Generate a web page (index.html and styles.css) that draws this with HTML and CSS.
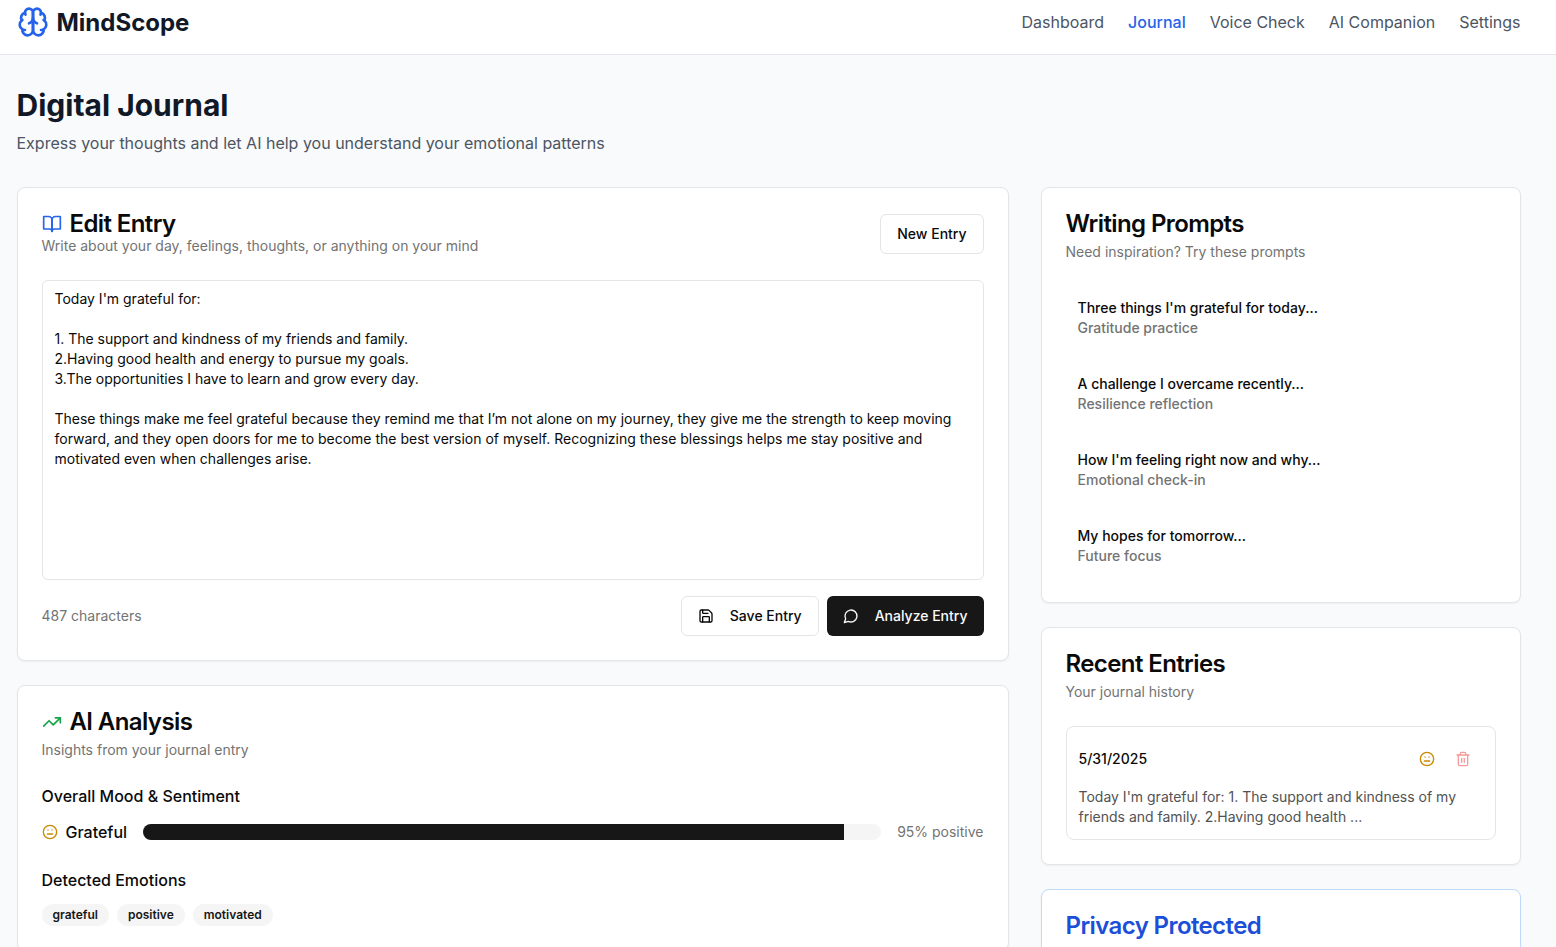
FILE: index.html
```html
<!DOCTYPE html>
<html lang="en">
<head>
    <meta charset="UTF-8">
    <meta name="viewport" content="width=device-width, initial-scale=1.0">
    <title>Digital Journal - MindScope</title>
    <link rel="stylesheet" href="styles.css">
</head>
<body>
    <header class="topbar">
        <a class="brand" href="#">
            <svg class="brand-icon" viewBox="0 0 24 24">
                <path d="M12 5a3 3 0 1 0-5.997.125 4 4 0 0 0-2.526 5.77 4 4 0 0 0 .556 6.588A4 4 0 1 0 12 18Z"/>
                <path d="M12 5a3 3 0 1 1 5.997.125 4 4 0 0 1 2.526 5.77 4 4 0 0 1-.556 6.588A4 4 0 1 1 12 18Z"/>
                <path d="M15 13a4.5 4.5 0 0 1-3-4 4.5 4.5 0 0 1-3 4"/>
                <path d="M17.599 6.5a3 3 0 0 0 .399-1.375"/>
                <path d="M6.003 5.125A3 3 0 0 0 6.401 6.5"/>
                <path d="M3.477 10.896a4 4 0 0 1 .585-.396"/>
                <path d="M19.938 10.5a4 4 0 0 1 .585.396"/>
                <path d="M6 18a4 4 0 0 1-1.967-.516"/>
                <path d="M19.967 17.484A4 4 0 0 1 18 18"/>
            </svg>
            <span>MindScope</span>
        </a>
        <nav class="nav">
            <a href="#">Dashboard</a>
            <a href="#" class="active">Journal</a>
            <a href="#">Voice Check</a>
            <a href="#">AI Companion</a>
            <a href="#">Settings</a>
        </nav>
    </header>

    <main class="page">
        <h1>Digital Journal</h1>
        <p class="page-sub">Express your thoughts and let AI help you understand your emotional patterns</p>

        <div class="layout">
            <div class="main-col">
                <section class="card">
                    <div class="card-head-row">
                        <div>
                            <h2 class="card-title-tight">
                                <svg class="icon title-icon blue" viewBox="0 0 24 24">
                                    <path d="M2 3h6a4 4 0 0 1 4 4v14a3 3 0 0 0-3-3H2z"/>
                                    <path d="M22 3h-6a4 4 0 0 0-4 4v14a3 3 0 0 1 3-3h7z"/>
                                </svg>
                                Edit Entry
                            </h2>
                            <p class="muted">Write about your day, feelings, thoughts, or anything on your mind</p>
                        </div>
                        <button class="btn btn-outline">New Entry</button>
                    </div>

                    <textarea class="entry-text" spellcheck="false">Today I'm grateful for:

1. The support and kindness of my friends and family.
2.Having good health and energy to pursue my goals.
3.The opportunities I have to learn and grow every day.

These things make me feel grateful because they remind me that I’m not alone on my journey, they give me the strength to keep moving forward, and they open doors for me to become the best version of myself. Recognizing these blessings helps me stay positive and motivated even when challenges arise.</textarea>

                    <div class="entry-foot">
                        <span class="muted">487 characters</span>
                        <div class="button-group">
                            <button class="btn btn-outline">
                                <svg class="icon" viewBox="0 0 24 24">
                                    <path d="M15.2 3a2 2 0 0 1 1.4.6l3.8 3.8a2 2 0 0 1 .6 1.4V19a2 2 0 0 1-2 2H5a2 2 0 0 1-2-2V5a2 2 0 0 1 2-2z"/>
                                    <path d="M17 21v-7a1 1 0 0 0-1-1H8a1 1 0 0 0-1 1v7"/>
                                    <path d="M7 3v4a1 1 0 0 0 1 1h7"/>
                                </svg>
                                Save Entry
                            </button>
                            <button class="btn btn-dark">
                                <svg class="icon" viewBox="0 0 24 24">
                                    <path d="M7.9 20A9 9 0 1 0 4 16.1L2 22Z"/>
                                </svg>
                                Analyze Entry
                            </button>
                        </div>
                    </div>
                </section>

                <section class="card">
                    <h2 class="card-title-tight">
                        <svg class="icon title-icon green" viewBox="0 0 24 24">
                            <polyline points="22 7 13.5 15.5 8.5 10.5 2 17"/>
                            <polyline points="16 7 22 7 22 13"/>
                        </svg>
                        AI Analysis
                    </h2>
                    <p class="muted card-sub">Insights from your journal entry</p>

                    <h3 class="block-title">Overall Mood &amp; Sentiment</h3>
                    <div class="mood-row">
                        <svg class="icon amber" viewBox="0 0 24 24">
                            <circle cx="12" cy="12" r="10"/>
                            <line x1="8" x2="16" y1="15" y2="15"/>
                            <line x1="9" x2="9.01" y1="9" y2="9"/>
                            <line x1="15" x2="15.01" y1="9" y2="9"/>
                        </svg>
                        <span class="mood-name">Grateful</span>
                        <div class="bar"><div class="bar-fill" style="width: 95%"></div></div>
                        <span class="muted">95% positive</span>
                    </div>

                    <h3 class="block-title">Detected Emotions</h3>
                    <div class="chips">
                        <span class="chip">grateful</span>
                        <span class="chip">positive</span>
                        <span class="chip">motivated</span>
                    </div>
                </section>
            </div>

            <aside class="side-col">
                <section class="card">
                    <h2 class="card-title">Writing Prompts</h2>
                    <p class="muted card-sub">Need inspiration? Try these prompts</p>
                    <div class="prompts">
                        <div class="prompt">
                            <div class="prompt-title">Three things I'm grateful for today...</div>
                            <div class="muted prompt-sub">Gratitude practice</div>
                        </div>
                        <div class="prompt">
                            <div class="prompt-title">A challenge I overcame recently...</div>
                            <div class="muted prompt-sub">Resilience reflection</div>
                        </div>
                        <div class="prompt">
                            <div class="prompt-title">How I'm feeling right now and why...</div>
                            <div class="muted prompt-sub">Emotional check-in</div>
                        </div>
                        <div class="prompt">
                            <div class="prompt-title">My hopes for tomorrow...</div>
                            <div class="muted prompt-sub">Future focus</div>
                        </div>
                    </div>
                </section>

                <section class="card">
                    <h2 class="card-title">Recent Entries</h2>
                    <p class="muted card-sub">Your journal history</p>
                    <div class="recent">
                        <div class="recent-head">
                            <span class="recent-date">5/31/2025</span>
                            <div class="recent-actions">
                                <svg class="icon amber" viewBox="0 0 24 24">
                                    <circle cx="12" cy="12" r="10"/>
                                    <line x1="8" x2="16" y1="15" y2="15"/>
                                    <line x1="9" x2="9.01" y1="9" y2="9"/>
                                    <line x1="15" x2="15.01" y1="9" y2="9"/>
                                </svg>
                                <button class="icon-btn">
                                    <svg class="icon red" viewBox="0 0 24 24">
                                        <path d="M3 6h18"/>
                                        <path d="M19 6v14c0 1-1 2-2 2H7c-1 0-2-1-2-2V6"/>
                                        <path d="M8 6V4c0-1 1-2 2-2h4c1 0 2 1 2 2v2"/>
                                        <line x1="10" x2="10" y1="11" y2="17"/>
                                        <line x1="14" x2="14" y1="11" y2="17"/>
                                    </svg>
                                </button>
                            </div>
                        </div>
                        <p class="recent-text">Today I'm grateful for: 1. The support and kindness of my friends and family. 2.Having good health ...</p>
                    </div>
                </section>

                <section class="card card-privacy">
                    <h2 class="card-title privacy-title">Privacy Protected</h2>
                </section>
            </aside>
        </div>
    </main>
</body>
</html>
```

FILE: styles.css
```css
html, body {
    height: 100vh;
    overflow: hidden;
}

body {
    margin: 0;
    font-family: Inter, "Liberation Sans", sans-serif;
    background-color: #f9fafb;
    color: #0a0a0a;
}

h1, h2, h3, p {
    margin: 0;
}

a {
    text-decoration: none;
}

/* Top bar */
.topbar {
    display: flex;
    justify-content: space-between;
    align-items: center;
    height: 44px;
    padding: 0 35.5px 10px 16.5px;
    background-color: #fff;
    border-bottom: 1px solid #e5e7eb;
}

.brand {
    display: flex;
    align-items: center;
    gap: 8px;
    font-size: 24px;
    font-weight: 700;
    color: #111827;
}

.brand-icon {
    width: 32px;
    height: 32px;
    fill: none;
    stroke: #2563eb;
    stroke-width: 2;
    stroke-linecap: round;
    stroke-linejoin: round;
}

.nav {
    display: flex;
    gap: 24px;
}

.nav a {
    font-size: 16px;
    color: #4b5563;
}

.nav a.active {
    color: #2563eb;
    font-weight: 500;
}

/* Page */
.page {
    padding: 32px 35.5px 32px 16.5px;
}

h1 {
    font-size: 30px;
    line-height: 36px;
    font-weight: 700;
    color: #111827;
}

.page-sub {
    margin-top: 8px;
    font-size: 16px;
    line-height: 24px;
    color: #4b5563;
}

.layout {
    display: grid;
    grid-template-columns: repeat(3, 1fr);
    gap: 32px;
    margin-top: 32px;
}

.main-col {
    grid-column: span 2;
    display: flex;
    flex-direction: column;
    gap: 24px;
}

.side-col {
    display: flex;
    flex-direction: column;
    gap: 24px;
}

/* Cards */
.card {
    padding: 24px;
    background-color: #fff;
    border: 1px solid #e5e5e5;
    border-radius: 8px;
    box-shadow: 0 1px 2px rgba(0, 0, 0, 0.05);
}

.card-title,
.card-title-tight {
    font-size: 24px;
    line-height: 24px;
    font-weight: 600;
    letter-spacing: -0.6px;
}

.card-title-tight {
    display: flex;
    align-items: center;
    gap: 8px;
}

.card-sub {
    margin-top: 6px;
}

.muted {
    font-size: 14px;
    line-height: 20px;
    color: #737373;
}

.icon {
    flex-shrink: 0;
    width: 16px;
    height: 16px;
    fill: none;
    stroke: currentColor;
    stroke-width: 2;
    stroke-linecap: round;
    stroke-linejoin: round;
}

.title-icon {
    width: 20px;
    height: 20px;
}

.blue { color: #2563eb; }
.green { color: #16a34a; }
.amber { color: #ca8a04; }
.red { color: #f79a9a; }

/* Buttons */
.btn {
    display: inline-flex;
    align-items: center;
    gap: 16px;
    height: 40px;
    padding: 0 16px;
    font-family: inherit;
    font-size: 14px;
    line-height: 20px;
    font-weight: 500;
    border-radius: 6px;
    cursor: pointer;
    box-sizing: border-box;
}

.btn-outline {
    background-color: #fff;
    color: #0a0a0a;
    border: 1px solid #e5e5e5;
}

.btn-dark {
    background-color: #171717;
    color: #fafafa;
    border: none;
}

.button-group {
    display: flex;
    gap: 8px;
}

/* Entry editor */
.card-head-row {
    display: flex;
    justify-content: space-between;
    align-items: center;
}

.entry-text {
    display: block;
    width: 100%;
    height: 300px;
    margin-top: 24px;
    padding: 8px 12px;
    box-sizing: border-box;
    font-family: inherit;
    font-size: 14px;
    line-height: 20px;
    color: #0a0a0a;
    background-color: #fff;
    border: 1px solid #e5e5e5;
    border-radius: 6px;
    resize: none;
    outline: none;
}

.entry-foot {
    display: flex;
    justify-content: space-between;
    align-items: center;
    margin-top: 16px;
}

/* AI analysis */
.block-title {
    margin-top: 24px;
    font-size: 16px;
    line-height: 24px;
    font-weight: 500;
}

.mood-row {
    display: flex;
    align-items: center;
    gap: 16px;
    margin-top: 12px;
}

.mood-row .icon {
    margin-right: -8px;
}

.mood-name {
    font-size: 16px;
    line-height: 24px;
    font-weight: 500;
}

.bar {
    flex: 1;
    height: 16px;
    background-color: #f5f5f5;
    border-radius: 9999px;
    overflow: hidden;
}

.bar-fill {
    height: 100%;
    background-color: #171717;
}

.chips {
    display: flex;
    gap: 8px;
    margin-top: 12px;
}

.chip {
    padding: 3px 11px;
    font-size: 12px;
    line-height: 16px;
    font-weight: 600;
    color: #171717;
    background-color: #f5f5f5;
    border-radius: 9999px;
}

/* Prompts */
.prompts {
    display: flex;
    flex-direction: column;
    gap: 12px;
    margin-top: 24px;
}

.prompt {
    padding: 12px;
}

.prompt-title {
    font-size: 14px;
    line-height: 20px;
    font-weight: 500;
}

.prompt-sub {
    font-weight: 500;
}

/* Recent entries */
.recent {
    margin-top: 24px;
    padding: 12px;
    border: 1px solid #e5e5e5;
    border-radius: 8px;
}

.recent-head {
    display: flex;
    justify-content: space-between;
    align-items: center;
    height: 40px;
}

.recent-date {
    font-size: 14px;
    line-height: 20px;
    font-weight: 500;
}

.recent-actions {
    display: flex;
    align-items: center;
    gap: 8px;
}

.icon-btn {
    display: flex;
    align-items: center;
    justify-content: center;
    width: 40px;
    height: 40px;
    padding: 0;
    background: none;
    border: none;
    cursor: pointer;
}

.recent-text {
    margin-top: 8px;
    font-size: 14px;
    line-height: 20px;
    color: #525252;
}

/* Privacy */
.card-privacy {
    border-color: #bfdbfe;
}

.privacy-title {
    color: #1d4ed8;
}
```
